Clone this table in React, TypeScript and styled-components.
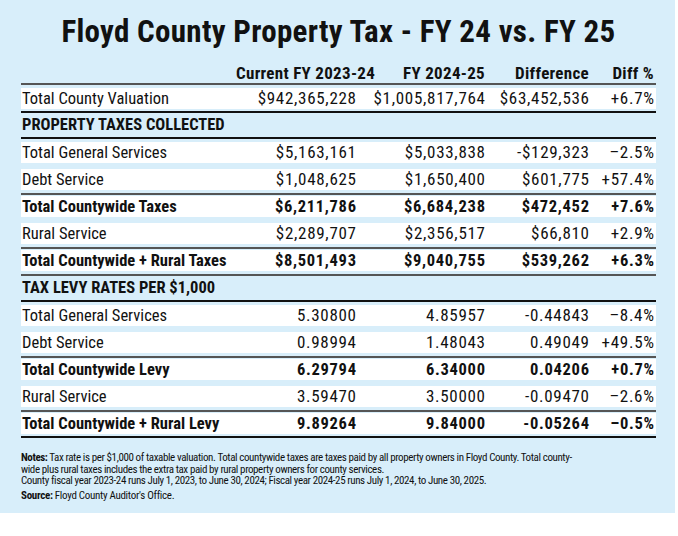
import React from "react";
import styled, { createGlobalStyle } from "styled-components";

const FONT = `"Liberation Sans Narrow", "Roboto Condensed", "Arial Narrow", "Liberation Sans", sans-serif`;

const Global = createGlobalStyle`
  html, body { margin: 0; padding: 0; background: #ffffff; }
  body { font-family: ${FONT}; color: #111; }
`;

const Panel = styled.div`
  box-sizing: border-box;
  width: 675px;
  height: 513px;
  background: #d8eefa;
  padding: 13px 19px 0 21px;
  display: flex;
  flex-direction: column;
`;

const Title = styled.h1`
  margin: 0;
  font-family: ${FONT};
  font-weight: 700;
  font-size: 31px;
  line-height: 38px;
  text-align: center;
  letter-spacing: 0.3px;
  color: #111;
`;

const Table = styled.div`
  display: flex;
  flex-direction: column;
`;

const COLS = "215px 120px 129px 104px 65px";

const HeaderRow = styled.div`
  display: grid;
  grid-template-columns: ${COLS};
  padding-right: 2px;
  height: 32px;
  align-items: end;
  border-bottom: 2px solid #555;
`;

const HeadCell = styled.div`
  font-weight: 700;
  font-size: 17px;
  line-height: 20px;
  text-align: right;
  white-space: nowrap;
  letter-spacing: 0.3px;
`;

const RowWrap = styled.div<{ $ruleTop?: boolean; $ruleBottom?: boolean; $last?: boolean }>`
  padding-top: ${(p) => (p.$ruleTop ? "1px" : "3px")};
  padding-bottom: ${(p) => (p.$last ? "2px" : "3px")};
  border-top: ${(p) => (p.$ruleTop ? "2px solid #555" : "none")};
  border-bottom: ${(p) => (p.$ruleBottom ? "2px solid #111" : "none")};
`;

const Band = styled.div<{ $bold?: boolean }>`
  display: grid;
  grid-template-columns: ${COLS};
  padding-right: 2px;
  height: 21px;
  align-items: center;
  background: #ffffff;
  font-weight: ${(p) => (p.$bold ? 700 : 400)};
  font-size: ${(p) => (p.$bold ? "16.5px" : "17px")};
  line-height: 21px;
`;

const Label = styled.div`
  padding-left: 1px;
  font-size: 16.5px;
  white-space: nowrap;
`;

const Num = styled.div`
  text-align: right;
  white-space: nowrap;
  letter-spacing: 0.7px;
  margin-right: -0.7px;
`;

const SectionHead = styled.div<{ $ruleTop?: boolean }>`
  padding: 2px 0 2px 1px;
  font-weight: 700;
  font-size: 16.5px;
  line-height: 20px;
  border-top: ${(p) => (p.$ruleTop ? "2px solid #555" : "none")};
  border-bottom: 2px solid #111;
`;

const Notes = styled.div`
  margin-top: 14px;
  font-size: 11px;
  line-height: 11.5px;
  letter-spacing: -0.4px;
  color: #111;
`;

const NoteLine = styled.div`
  white-space: nowrap;
`;

const Source = styled.div`
  margin-top: 3px;
  font-size: 11px;
  line-height: 11.5px;
  letter-spacing: -0.3px;
  white-space: nowrap;
`;

const B = styled.b`
  font-weight: 700;
`;

type Row = { label: string; vals: string[]; bold?: boolean };

const valuation: Row = {
  label: "Total County Valuation",
  vals: ["$942,365,228", "$1,005,817,764", "$63,452,536", "+6.7%"],
};

const collected: Row[] = [
  { label: "Total General Services", vals: ["$5,163,161", "$5,033,838", "-$129,323", "\u20132.5%"] },
  { label: "Debt Service", vals: ["$1,048,625", "$1,650,400", "$601,775", "+57.4%"] },
  { label: "Total Countywide Taxes", vals: ["$6,211,786", "$6,684,238", "$472,452", "+7.6%"], bold: true },
  { label: "Rural Service", vals: ["$2,289,707", "$2,356,517", "$66,810", "+2.9%"] },
  { label: "Total Countywide + Rural Taxes", vals: ["$8,501,493", "$9,040,755", "$539,262", "+6.3%"], bold: true },
];

const levy: Row[] = [
  { label: "Total General Services", vals: ["5.30800", "4.85957", "-0.44843", "\u20138.4%"] },
  { label: "Debt Service", vals: ["0.98994", "1.48043", "0.49049", "+49.5%"] },
  { label: "Total Countywide Levy", vals: ["6.29794", "6.34000", "0.04206", "+0.7%"], bold: true },
  { label: "Rural Service", vals: ["3.59470", "3.50000", "-0.09470", "\u20132.6%"] },
  { label: "Total Countywide + Rural Levy", vals: ["9.89264", "9.84000", "-0.05264", "\u20130.5%"], bold: true },
];

function DataRow({ row, ruleBottom, last }: { row: Row; ruleBottom?: boolean; last?: boolean }) {
  return (
    <RowWrap $ruleTop={row.bold} $ruleBottom={ruleBottom} $last={last}>
      <Band $bold={row.bold}>
        <Label>{row.label}</Label>
        {row.vals.map((v, i) => (
          <Num key={i}>{v}</Num>
        ))}
      </Band>
    </RowWrap>
  );
}

export default function App() {
  return (
    <>
      <Global />
      <Panel>
        <Title>Floyd County Property Tax - FY 24 vs. FY 25</Title>
        <Table>
          <HeaderRow>
            <div />
            <HeadCell>Current FY 2023-24</HeadCell>
            <HeadCell>FY 2024-25</HeadCell>
            <HeadCell>Difference</HeadCell>
            <HeadCell>Diff %</HeadCell>
          </HeaderRow>
          <DataRow row={valuation} ruleBottom last />
          <SectionHead>PROPERTY TAXES COLLECTED</SectionHead>
          {collected.map((r) => (
            <DataRow key={r.label} row={r} />
          ))}
          <SectionHead $ruleTop>TAX LEVY RATES PER $1,000</SectionHead>
          {levy.map((r, i) => (
            <DataRow key={r.label} row={r} ruleBottom={i === levy.length - 1} last={i === levy.length - 1} />
          ))}
        </Table>
        <Notes>
          <NoteLine>
            <B>Notes:</B> Tax rate is per $1,000 of taxable valuation. Total countywide taxes are taxes paid by all
            property owners in Floyd County. Total county-
          </NoteLine>
          <NoteLine>wide plus rural taxes includes the extra tax paid by rural property owners for county services.</NoteLine>
          <NoteLine>
            County fiscal year 2023-24 runs July 1, 2023, to June 30, 2024; Fiscal year 2024-25 runs July 1, 2024, to
            June 30, 2025.
          </NoteLine>
        </Notes>
        <Source>
          <B>Source:</B> Floyd County Auditor's Office.
        </Source>
      </Panel>
    </>
  );
}
